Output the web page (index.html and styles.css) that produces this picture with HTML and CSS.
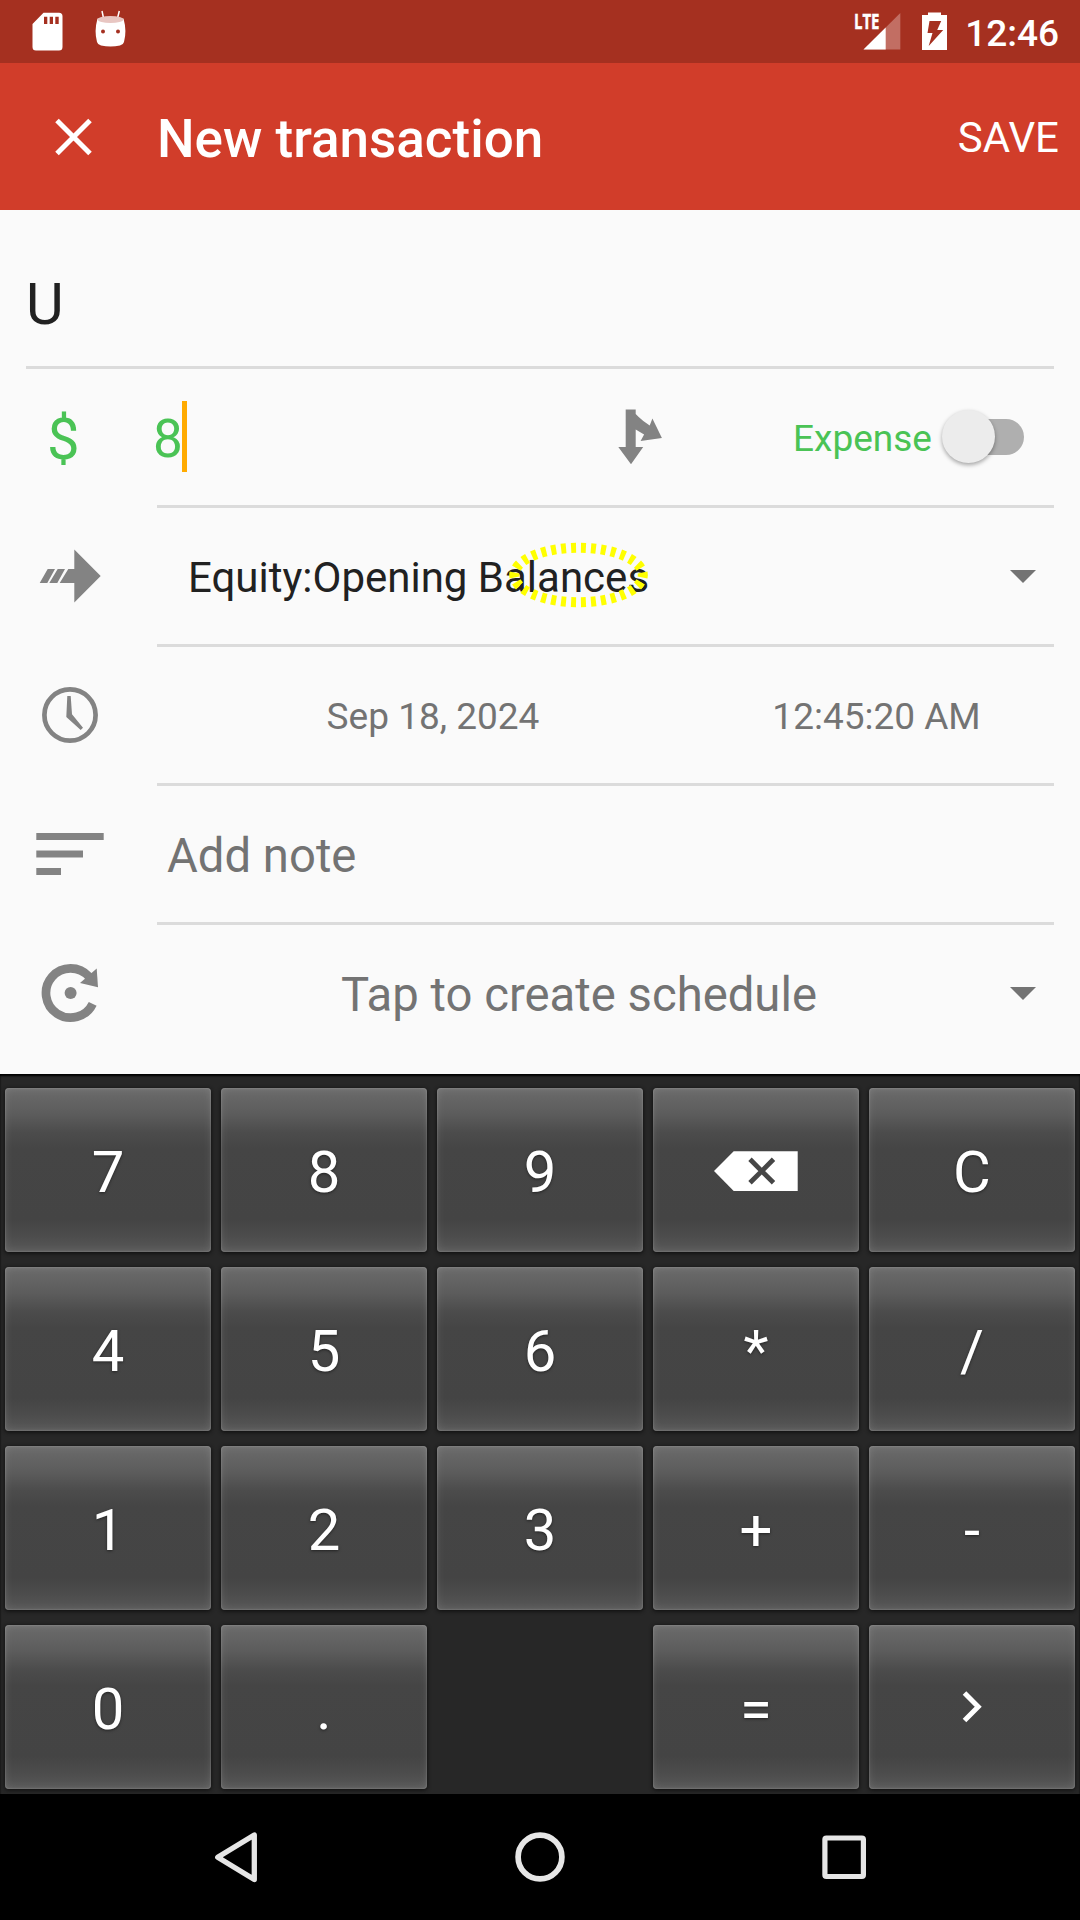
FILE: index.html
```
<!DOCTYPE html>
<html lang="en">
<head>
<meta charset="utf-8">
<title>New transaction</title>
<link rel="stylesheet" href="styles.css">
</head>
<body>
<div class="screen">
  <div class="status">
    <svg class="status-left" viewBox="0 0 160 63" width="160" height="63">
      <path fill="#fff" fill-rule="evenodd" d="M43.5 12.7H59a3.5 3.5 0 0 1 3.5 3.5V47a3.5 3.5 0 0 1-3.5 3.5H36a3.5 3.5 0 0 1-3.5-3.5V24zM44 16.7V24h3.300V16.700zM49.700 16.700V24H53V16.700zM55.300 16.700V24h3.400V16.700z"/>
      <path stroke="#fff" stroke-width="1.500" d="M102 11l1.700 8M119.300 11l-2 8"/>
      <path fill="#fff" d="M97.500 18.500Q94 31 97 42q.8 3 4 3.500 9.500 2 19 0 3.200-.5 4-3.500 3-11-.5-23.500z"/>
      <ellipse cx="110.500" cy="19.500" rx="12.800" ry="3.600" fill="#e8c6c2"/>
      <circle cx="103" cy="31.500" r="2" fill="#a53020"/><circle cx="118" cy="31.500" r="2" fill="#a53020"/>
    </svg>
    <div class="status-right">
      <div class="signal">
        <span class="lte">LTE</span>
        <svg viewBox="850 0 60 63" width="60" height="63">
          <path fill="#c26e63" d="M900.300 13V49.500H863.500z"/>
          <path fill="#fff" d="M885.700 27.500v22H863.500z"/>
        </svg>
      </div>
      <svg class="battery" viewBox="920 0 30 63" width="30" height="63">
        <path fill="#fff" d="M928 12.500h13V15h6V50H922V15h6z"/>
        <path fill="#a53020" d="M929.500 21h11.700l-4 9h6l-14.500 16 3.800-13h-5z"/>
      </svg>
      <span class="time">12:46</span>
    </div>
  </div>

  <header class="toolbar">
    <svg class="close" viewBox="53 116.500 40 40" width="40" height="40"><path d="M57 120l33 33M90 120l-33 33" fill="none" stroke="#fff" stroke-width="5"/></svg>
    <h1 class="title">New transaction</h1>
    <span class="save">SAVE</span>
  </header>

  <main class="form">
    <div class="desc"><span>U</span></div>

    <div class="row">
      <div class="lead currency">$</div>
      <div class="field amount">
        <span class="value">8</span><span class="cursor"></span>
        <svg class="split" viewBox="615 405 50 64" width="50" height="64">
          <path fill="#838383" d="M625.700 409.500h10V414l3 3q4 4 11 8.500l2.700-7 9.500 19.500-21.300 3 3.500-6.500-8.400-5V447h7.500L631 464.300 618.300 447h7.400z"/>
        </svg>
        <span class="type">Expense</span>
        <span class="switch"><span class="thumb"></span></span>
      </div>
    </div>

    <div class="row">
      <svg class="lead" viewBox="0 508 157 136">
        <path fill="#838383" d="M74.300 549.500L100.700 576 74.300 602.500V583H59.700l8.600-14h6zM47.700 569H55l-7.700 14h-7.600zM57.700 569H65l-7.700 14h-8z"/>
      </svg>
      <div class="field account">
        <span class="account-name">Equity:Opening Balances</span>
        <svg class="caret" viewBox="0 0 26 13" width="26" height="13"><path d="M0 0h26L13 13z" fill="#737373"/></svg>
        <svg class="ring" viewBox="500 535 160 80" width="160" height="80"><ellipse cx="578.500" cy="575" rx="64.300" ry="27.300" pathLength="300" fill="none" stroke="#ff0" stroke-width="10" stroke-dasharray="5 5" stroke-dashoffset="2.500"/></svg>
      </div>
    </div>

    <div class="row">
      <svg class="lead" viewBox="0 647 157 136">
        <circle cx="70" cy="715" r="25.600" fill="none" stroke="#838383" stroke-width="4.700"/>
        <path fill="#838383" d="M67.300 696h3.400l1.300 18.300 11 13.400-2.300 2.200L66.300 717z"/>
      </svg>
      <div class="field when"><span class="date">Sep 18, 2024</span><span class="hour">12:45:20 AM</span></div>
    </div>

    <div class="row">
      <svg class="lead" viewBox="0 786 157 136"><path fill="#838383" d="M36.300 833H103.700v7H36.300zM36.300 850.400H83v7.200H36.300zM36.300 868H61v7H36.300z"/></svg>
      <div class="field note">Add note</div>
    </div>

    <div class="row last">
      <svg class="lead" viewBox="0 925 157 136">
        <path fill="none" stroke="#838383" stroke-width="8.700" d="M92.700 1003.800A24.600 24.600 0 1 1 89 976.700"/>
        <path fill="#838383" d="M96.700 968.600L98 987.200 80 983z"/>
        <circle cx="70.600" cy="993" r="6" fill="#838383"/>
      </svg>
      <div class="field schedule">
        <span class="schedule-text">Tap to create schedule</span>
        <svg class="caret" viewBox="0 0 26 13" width="26" height="13"><path d="M0 0h26L13 13z" fill="#737373"/></svg>
      </div>
    </div>
  </main>

  <div class="keypad">
    <div class="key">7</div><div class="key">8</div><div class="key">9</div>
    <div class="key icon"><svg viewBox="706 1140 100 60" width="100" height="60"><path fill="#fff" d="M714 1171l19.700-19.700h64v39.700h-64z"/><path d="M750 1159.300l23.500 23.500M773.500 1159.300L750 1182.800" stroke="#464646" stroke-width="4.800"/></svg></div>
    <div class="key">C</div>
    <div class="key">4</div><div class="key">5</div><div class="key">6</div><div class="key">*</div><div class="key">/</div>
    <div class="key">1</div><div class="key">2</div><div class="key">3</div><div class="key">+</div><div class="key">-</div>
    <div class="key">0</div><div class="key">.</div><div class="blank"></div><div class="key">=</div>
    <div class="key icon"><svg viewBox="952 1687 40 40" width="40" height="40"><path d="M964.500 1693l13.700 13.700-13.700 13.700" fill="none" stroke="#fff" stroke-width="5"/></svg></div>
  </div>

  <nav class="nav">
    <svg viewBox="206 1827 60 60" width="60" height="60"><path d="M217.700 1857.300l36.600-22.300v44.600z" fill="none" stroke="#e6e6e6" stroke-width="5.300" stroke-linejoin="round"/></svg>
    <svg viewBox="510 1827 60 60" width="60" height="60"><circle cx="540" cy="1857" r="21.900" fill="none" stroke="#e6e6e6" stroke-width="5.700"/></svg>
    <svg viewBox="814 1827 60 60" width="60" height="60"><rect x="824.900" y="1838" width="38.500" height="38.500" rx="1.500" fill="none" stroke="#e6e6e6" stroke-width="5.200"/></svg>
  </nav>
</div>
</body>
</html>
```
FILE: styles.css
```
* { box-sizing: border-box; }
body { margin: 0; font-family: Roboto, sans-serif; }
svg { display: block; flex: none; }
.screen { width: 1080px; height: 1920px; display: flex; flex-direction: column; overflow: hidden; background: #fafafa; }

.status { height: 63px; flex: none; background: #a53020; display: flex; justify-content: space-between; color: #fff; }
.status-right { display: flex; padding-right: 21px; }
.signal { position: relative; margin-right: 10px; }
.lte { position: absolute; left: 4px; top: 9px; font: 700 22px/22px "Open Sans", sans-serif; transform: scaleX(.68); transform-origin: 0 0; -webkit-text-stroke: .5px #fff; }
.battery { margin-right: 15px; }
.time { font-size: 37px; font-weight: 500; line-height: 63px; padding-top: 2px; }

.toolbar { height: 147px; flex: none; background: #d13d2a; color: #fff; display: flex; align-items: center; padding: 0 21px 0 53px; }
.title { margin: 0; padding: 4px 0 0 64px; font-size: 53px; font-weight: 500; flex: 1; }
.save { font-size: 42px; padding-top: 2px; }

.form { height: 864px; flex: none; }
.desc { height: 159px; margin: 0 26px; border-bottom: 3px solid #dbdbdb; display: flex; align-items: center; padding-top: 31px; font-size: 58px; color: #212121; }
.row { display: flex; height: 139px; padding-right: 26px; }
.lead { width: 157px; height: 136px; flex: none; }
.field { position: relative; flex: 1; display: flex; align-items: center; border-bottom: 3px solid #dbdbdb; }
.last .field { border-bottom-color: transparent; }

.currency { color: #4ac355; font-size: 58px; line-height: 136px; padding: 2px 0 0 47px; }
.amount { color: #4ac355; }
.value { font-size: 53px; margin-left: -4px; padding-top: 4px; }
.cursor { width: 5px; height: 71px; background: #ffab00; margin: 0 0 2px -1px; }
.split { margin-left: 428px; }
.type { margin-left: auto; font-size: 37px; padding-top: 2px; }
.switch { position: relative; width: 74px; height: 36px; border-radius: 18px; background: #afafaf; margin: 0 30px 0 18px; }
.thumb { position: absolute; left: -8px; top: -9px; width: 53px; height: 53px; border-radius: 50%; background: #ececec; box-shadow: 0 2px 4px rgba(0,0,0,.35); }

.account { justify-content: space-between; padding: 0 18px 0 31px; color: #212121; font-size: 42px; }
.account-name { padding-top: 2px; }
.ring { position: absolute; left: 343px; top: 27px; }
.when { color: #737373; font-size: 37px; padding-top: 2px; }
.date { width: 552px; text-align: center; }
.hour { width: 345px; text-align: center; padding-right: 10px; }
.note { color: #737373; font-size: 47.250px; padding: 3px 0 0 10px; }
.schedule { color: #737373; font-size: 47.250px; padding-right: 18px; }
.schedule-text { flex: 1; text-align: center; padding: 3px 9px 0 0; }

.keypad { height: 720px; flex: none; background: #272727; padding: 14px 5px 5px; display: grid; grid-template-columns: repeat(5, 206px); grid-auto-rows: 164px; gap: 15px 10px; box-shadow: inset 0 2px 2px #000; }
.key { border-radius: 4px; display: flex; align-items: center; justify-content: center; padding-top: 4px; color: #fff; font-size: 58px; text-shadow: 0 1px 3px rgba(0,0,0,.5);
  background: linear-gradient(#6b6b6b 0, #5c5c5c 16%, #4c4c4c 27%, #454545 37%, #444 80%, #4c4c4c 90%, #585858 100%);
  box-shadow: inset 0 0 8px rgba(255,255,255,.13), inset 0 0 2px rgba(255,255,255,.3), 0 1px 4px #0b0b0b; }
.icon { padding: 0; }

.nav { height: 126px; flex: none; background: #000; display: flex; justify-content: center; align-items: center; gap: 244px; }
```
